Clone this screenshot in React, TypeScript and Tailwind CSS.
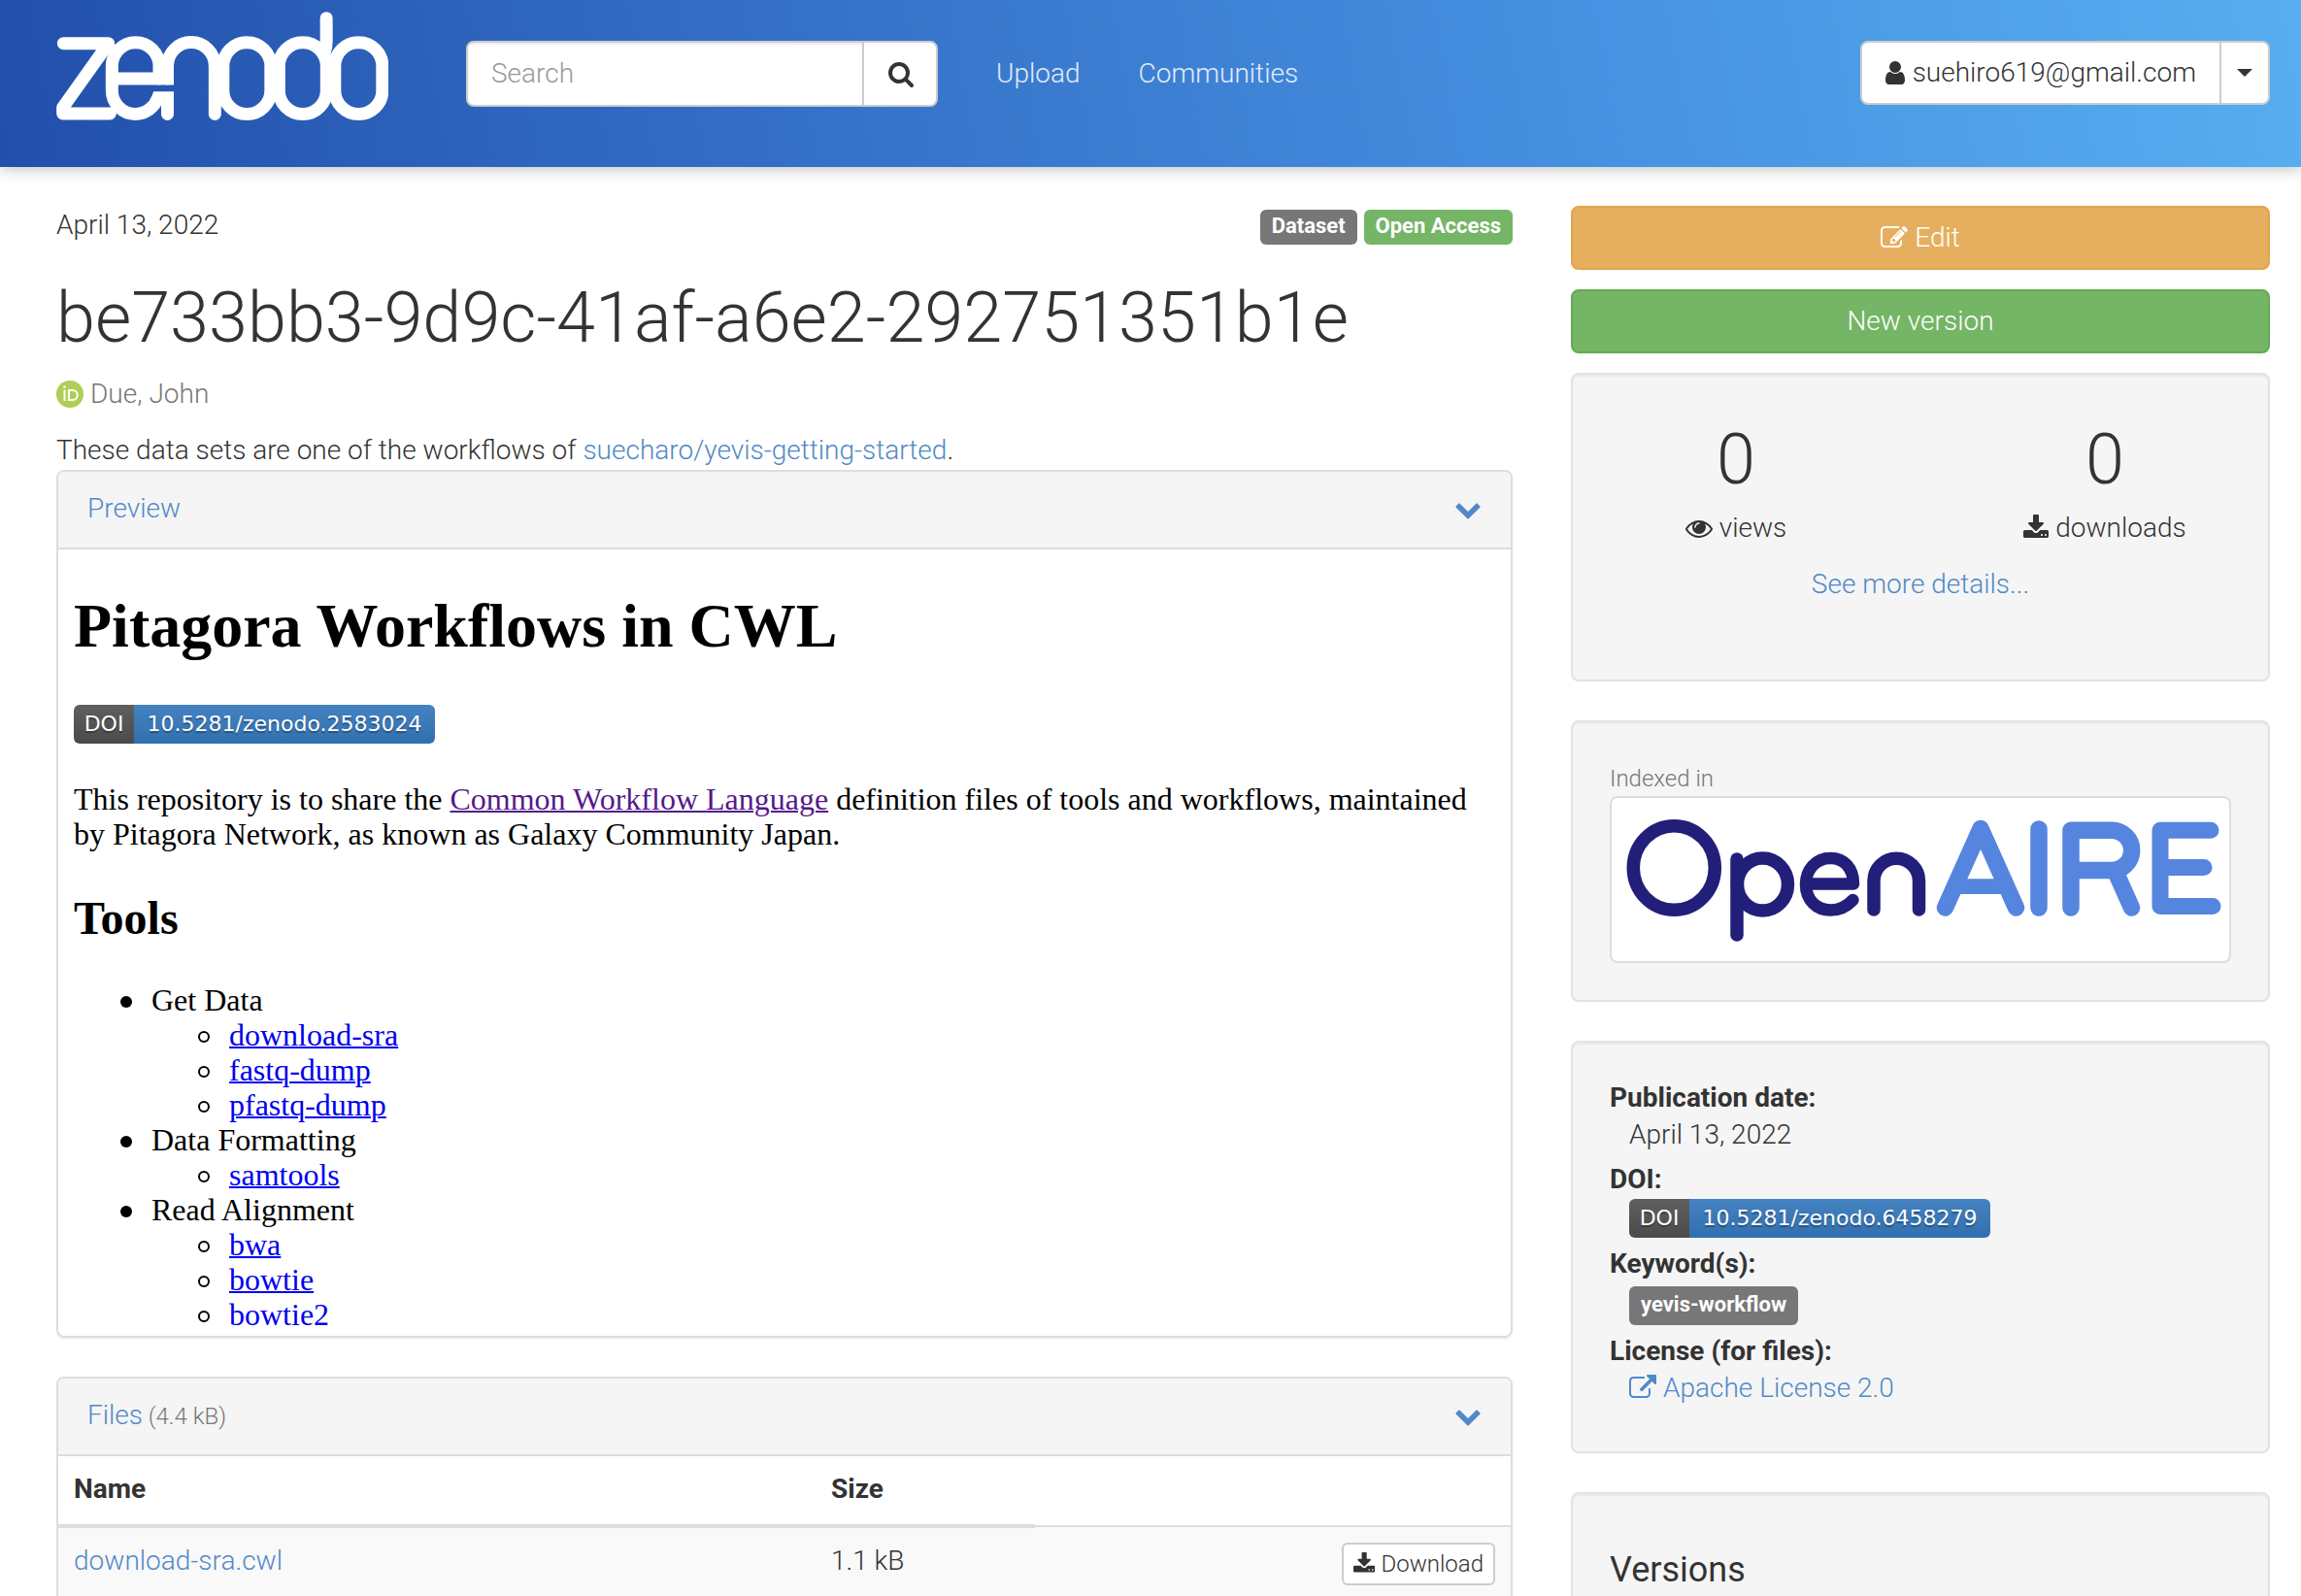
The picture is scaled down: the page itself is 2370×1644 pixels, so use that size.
import React from "react";

const ICONS = {
  search: {
    box: "0 0 1728 1792",
    d: "M1216 832q0-185-131.500-316.500t-316.500-131.500-316.500 131.500-131.500 316.500 131.500 316.500 316.500 131.500 316.500-131.500 131.500-316.500zm512 832q0 52-38 90t-90 38q-54 0-90-38l-343-342q-179 124-399 124-143 0-273.500-55.500t-225-150-150-225-55.500-273.500 55.500-273.500 150-225 225-150 273.500-55.500 273.500 55.500 225 150 150 225 55.500 273.500q0 220-124 399l343 343q37 37 37 90z",
  },
  user: {
    box: "256 0 1280 1792",
    d: "M1536 1399q0 109-62.500 187t-150.500 78h-854q-88 0-150.500-78t-62.500-187q0-85 8.500-160.500t31.500-152 58.500-131 94-89 134.500-34.500q131 128 313 128t313-128q76 0 134.500 34.500t94 89 58.500 131 31.500 152 8.500 160.500zm-256-887q0 159-112.500 271.500t-271.500 112.500-271.500-112.500-112.500-271.500 112.500-271.500 271.500-112.500 271.500 112.500 112.500 271.500z",
  },
  eye: {
    box: "0 0 1792 1792",
    d: "M1664 960q-152-236-381-353 61 104 61 225 0 185-131.500 316.500t-316.500 131.500-316.500-131.500-131.500-316.500q0-121 61-225-229 117-381 353 133 205 333.500 326.500t434.500 121.500 434.500-121.500 333.500-326.500zm-720-384q0-20-14-34t-34-14q-125 0-214.500 89.500t-89.500 214.500q0 20 14 34t34 14 34-14 14-34q0-86 61-147t147-61q20 0 34-14t14-34zm848 384q0 34-20 69-140 230-376.500 368.500t-499.500 138.500-499.500-139-376.500-368q-20-35-20-69t20-69q140-229 376.500-368t499.500-139 499.500 139 376.500 368q20 35 20 69z",
  },
  download: {
    box: "64 0 1664 1792",
    d: "M1344 1344q0-26-19-45t-45-19-45 19-19 45 19 45 45 19 45-19 19-45zm256 0q0-26-19-45t-45-19-45 19-19 45 19 45 45 19 45-19 19-45zm128-224v320q0 40-28 68t-68 28h-1472q-40 0-68-28t-28-68v-320q0-40 28-68t68-28h465l135 136q58 56 136 56t136-56l136-136h464q40 0 68 28t28 68zm-325-569q17 41-14 70l-448 448q-18 19-45 19t-45-19l-448-448q-31-29-14-70 17-39 59-39h256v-448q0-26 19-45t45-19h256q26 0 45 19t19 45v448h256q42 0 59 39z",
  },
  chevron: {
    box: "0 0 1792 1792",
    d: "M1683 808l-742 741q-19 19-45 19t-45-19l-742-741q-19-19-19-45.500t19-45.500l166-165q19-19 45-19t45 19l531 531 531-531q19-19 45-19t45 19l166 165q19 19 19 45.500t-19 45.500z",
  },
  external: {
    box: "0 0 1792 1792",
    d: "M1408 928v320q0 119-84.500 203.500t-203.500 84.500h-832q-119 0-203.500-84.500t-84.500-203.500v-832q0-119 84.500-203.500t203.500-84.500h704q14 0 23 9t9 23v64q0 14-9 23t-23 9h-704q-66 0-113 47t-47 113v832q0 66 47 113t113 47h832q66 0 113-47t47-113v-320q0-14 9-23t23-9h64q14 0 23 9t9 23zm384-864v512q0 26-19 45t-45 19-45-19l-176-176-652 652q-10 10-23 10t-23-10l-114-114q-10-10-10-23t10-23l652-652-176-176q-19-19-19-45t19-45 45-19h512q26 0 45 19t19 45z",
  },
  edit: {
    box: "0 0 1792 1792",
    d: "M888 1184l116-116-152-152-116 116v56h96v96h56zm440-720q-16-16-33 1l-350 350q-17 17-1 33t33-1l350-350q17-17 1-33zm80 594v190q0 119-84.500 203.500t-203.500 84.500h-832q-119 0-203.500-84.500t-84.500-203.500v-832q0-119 84.500-203.500t203.500-84.500h832q63 0 117 25 15 7 18 23 3 17-9 29l-49 49q-14 14-32 8-23-6-45-6h-832q-66 0-113 47t-47 113v832q0 66 47 113t113 47h832q66 0 113-47t47-113v-126q0-13 9-22l64-64q15-15 35-7t20 29zm-96-738l288 288-672 672h-288v-288zm444 132l-92 92-288-288 92-92q28-28 68-28t68 28l152 152q28 28 28 68t-28 68z",
  },
};

function Icon({ name, className = "h-7" }: { name: keyof typeof ICONS; className?: string }) {
  const icon = ICONS[name];
  return (
    <svg viewBox={icon.box} className={`${className} w-auto shrink-0`} fill="currentColor" aria-hidden="true">
      <path d={icon.d} />
    </svg>
  );
}

function ZenodoLogo() {
  return (
    <svg viewBox="24 36 1026 336" className="h-28 w-[342px]" role="img" aria-label="Zenodo">
      <g fill="none" stroke="#fff" strokeWidth="39" strokeLinecap="round">
        <path d="M46 134H185L44 332V351H190" strokeLinejoin="round" />
        <path d="M342 243V204A73 73 0 0 0 196 204V279A73 73 0 0 0 268 352.500C300 352.500 327 332 338 302.500H367.500V352.500" />
        <path d="M200 243H387" strokeLinecap="butt" />
        <path d="M367.500 243V204A73 73 0 0 1 514 204V352.500" />
        <rect x="539.500" y="131" width="147" height="221.500" rx="73" />
        <rect x="712" y="131" width="147" height="221.500" rx="73" />
        <path d="M858.500 56V130" />
        <path d="M854 160L858 140" />
        <rect x="884.500" y="131" width="147" height="221.500" rx="73" />
      </g>
    </svg>
  );
}

function OpenAireLogo() {
  return (
    <svg viewBox="0 0 620 152" className="block h-auto w-full" role="img" aria-label="OpenAIRE">
      <g fill="none" stroke="#221f7a" strokeWidth="13.500" strokeLinecap="round" strokeLinejoin="round">
        <ellipse cx="56.300" cy="64" rx="42" ry="43.300" />
        <path d="M121 55V133" />
        <ellipse cx="147.500" cy="81" rx="26" ry="27" />
        <path d="M193 80.500H241C241 64 231 54 217.500 54C202 54 192 66 192 81C192 97 203 107.500 217.500 107.500C228 107.500 235 103 240.500 97" strokeWidth="12.500" />
        <path d="M262 107V77.500A23.200 23.200 0 0 1 308.500 77.500V107" />
      </g>
      <g fill="none" stroke="#5685e0" strokeWidth="17.500" strokeLinecap="round" strokeLinejoin="round">
        <path d="M335.500 105L372 23.500L408.500 105" />
        <path d="M348 83.200H396" strokeWidth="15.700" strokeLinecap="butt" />
        <path d="M432 24V105" />
        <path d="M465 105V25.200H507A20.700 20.700 0 0 1 507 66.600H465" />
        <path d="M511 68L527.500 105" />
        <path d="M609 25.200H557V103.500H611M557 63.500H602" strokeWidth="17" />
      </g>
    </svg>
  );
}

function OrcidIcon() {
  return (
    <svg viewBox="0 0 28 28" className="size-7" role="img" aria-label="ORCID">
      <circle cx="14" cy="14" r="14" fill="#aecf54" />
      <g fill="none" stroke="#fff" strokeWidth="2">
        <path d="M8.500 9.500V21" />
        <path d="M13 10H17A4.700 5 0 0 1 17 20H13Z" />
      </g>
      <circle cx="8.500" cy="6.500" r="1.300" fill="#fff" />
    </svg>
  );
}

function DoiBadge({ value }: { value: string }) {
  return (
    <a
      href="#doi"
      className="flex h-10 w-fit overflow-hidden rounded-md text-[22px] leading-10 font-normal text-white [font-family:Verdana,'DejaVu_Sans',sans-serif] [text-shadow:0_2px_1px_rgba(0,0,0,0.3)]"
    >
      <span className="w-[62px] bg-linear-to-b from-[#5f5f5f] to-[#4b4b4b] text-center">DOI</span>
      <span className="w-[310px] bg-linear-to-b from-[#4482c1] to-[#316fae] text-center">{value}</span>
    </a>
  );
}

function Card({ className = "", children }: { className?: string; children: React.ReactNode }) {
  return (
    <section
      className={`rounded-lg border-2 border-[#e3e3e3] bg-[#f5f5f5] px-[38px] shadow-[inset_0_2px_2px_rgba(0,0,0,0.05)] ${className}`}
    >
      {children}
    </section>
  );
}

function PanelHeader({ title, note }: { title: string; note?: string }) {
  return (
    <header className="flex items-center justify-between border-b-2 border-[#ddd] bg-[#f5f5f5] px-[30px] pt-[18px] pb-5">
      <a href="#panel" className="text-[#5189c7]">
        {title}
        {note && <small className="text-2xl leading-none text-[#777]"> {note}</small>}
      </a>
      <button type="button" aria-label={`Toggle ${title}`} className="text-[#5189c7]">
        <Icon name="chevron" />
      </button>
    </header>
  );
}

const TOOLS = [
  { group: "Get Data", items: ["download-sra", "fastq-dump", "pfastq-dump"] },
  { group: "Data Formatting", items: ["samtools"] },
  { group: "Read Alignment", items: ["bwa", "bowtie", "bowtie2"] },
];

function Header() {
  return (
    <header className="relative z-10 flex h-43 shrink-0 items-start bg-[linear-gradient(80deg,#224fab,#4792e2_70%,#57aef0)] pr-8 pl-[58px] shadow-[0_0_16px_rgba(0,0,0,0.32)]">
      <a href="#home" className="mt-3">
        <ZenodoLogo />
      </a>
      <form className="mt-[42px] ml-20 flex h-17 w-[486px] overflow-hidden rounded-lg border-2 border-[#ccc] bg-white">
        <input
          type="text"
          aria-label="Search"
          placeholder="Search"
          className="min-w-0 flex-1 px-6 shadow-[inset_0_2px_2px_rgba(0,0,0,0.075)] outline-none placeholder:text-[#999]"
        />
        <button type="button" aria-label="Run search" className="flex w-[76px] items-center justify-center border-l-2 border-[#ccc]">
          <Icon name="search" />
        </button>
      </form>
      <nav className="mt-14 ml-15 flex gap-15 text-white/85">
        <a href="#upload">Upload</a>
        <a href="#communities">Communities</a>
      </nav>
      <div className="mt-[42px] ml-auto flex h-[66px] overflow-hidden rounded-lg border-2 border-[#ccc] bg-white">
        <button type="button" className="flex items-center gap-2 px-6">
          <Icon name="user" />
          suehiro619@gmail.com
        </button>
        <button type="button" aria-label="Account menu" className="flex w-[50px] items-center justify-center border-l-2 border-[#ccc]">
          <span className="border-x-8 border-t-8 border-x-transparent border-t-[#333]" />
        </button>
      </div>
    </header>
  );
}

function Preview() {
  return (
    <section className="overflow-hidden rounded-lg border-2 border-[#ddd] shadow-[0_2px_2px_rgba(0,0,0,0.05)]">
      <PanelHeader title="Preview" />
      <div className="mb-2.5 h-[800px] overflow-hidden px-4 pt-[43px] text-[32px] leading-9 font-normal text-black [font-family:'Liberation_Serif',serif]">
        <h2 className="text-[64px] leading-18 font-bold">Pitagora Workflows in CWL</h2>
        <div className="mt-[45px]">
          <DoiBadge value="10.5281/zenodo.2583024" />
        </div>
        <p className="mt-[39px]">
          This repository is to share the{" "}
          <a href="#cwl" className="text-[#551a8b] underline decoration-2">
            Common Workflow Language
          </a>{" "}
          definition files of tools and workflows, maintained by Pitagora Network, as known as Galaxy Community Japan.
        </p>
        <h3 className="mt-[42px] text-5xl leading-[54px] font-bold">Tools</h3>
        <ul className="mt-[39px] pl-20">
          {TOOLS.map((tool) => (
            <li
              key={tool.group}
              className="before:mr-5 before:mb-[3px] before:-ml-8 before:inline-block before:size-3 before:rounded-full before:bg-black"
            >
              {tool.group}
              <ul className="pl-20">
                {tool.items.map((item) => (
                  <li
                    key={item}
                    className="before:mr-5 before:mb-[3px] before:-ml-8 before:inline-block before:size-3 before:rounded-full before:border-2 before:border-black"
                  >
                    <a href={`#${item}`} className="text-[#0000ee] underline decoration-2">
                      {item}
                    </a>
                  </li>
                ))}
              </ul>
            </li>
          ))}
        </ul>
      </div>
    </section>
  );
}

function Files() {
  return (
    <section className="mt-10 overflow-hidden rounded-lg border-2 border-[#ddd]">
      <PanelHeader title="Files" note="(4.4 kB)" />
      <table className="w-full table-fixed text-left">
        <colgroup>
          <col className="w-[780px]" />
          <col className="w-[226px]" />
          <col />
        </colgroup>
        <thead>
          <tr>
            <th className="border-b-4 border-[#ddd] px-4 pt-[14px] pb-4 font-bold">Name</th>
            <th className="border-b-4 border-[#ddd] px-4 pt-[14px] pb-4 font-bold">Size</th>
            <th aria-label="Actions" />
          </tr>
        </thead>
        <tbody>
          <tr className="bg-[#f9f9f9] align-top">
            <td className="border-t-2 border-[#ddd] px-4 py-[14px]">
              <a href="#file" className="text-[#5189c7]">
                download-sra.cwl
              </a>
            </td>
            <td className="border-t-2 border-[#ddd] px-4 py-[14px]">1.1 kB</td>
            <td className="border-t-2 border-[#ddd] px-4 py-4">
              <button
                type="button"
                className="ml-auto flex h-11 items-center gap-1.5 rounded-md border-2 border-[#ccc] bg-white px-2.5 text-2xl"
              >
                <Icon name="download" className="h-6" />
                Download
              </button>
            </td>
          </tr>
        </tbody>
      </table>
    </section>
  );
}

function Sidebar() {
  return (
    <aside className="flex flex-col gap-10">
      <div className="flex flex-col gap-5">
        <button
          type="button"
          className="flex h-[66px] items-center justify-center gap-[7px] rounded-lg border-2 border-[#e3a448] bg-[#e6af5f] text-white"
        >
          <Icon name="edit" />
          Edit
        </button>
        <button type="button" className="h-[66px] rounded-lg border-2 border-[#64aa55] bg-[#74b566] text-white">
          New version
        </button>
        <Card className="pt-12 pb-[78px] text-center">
          <div className="-mx-15 grid grid-cols-2">
            <div>
              <div className="text-7xl leading-20">0</div>
              <div className="mt-2.5 flex items-center justify-center gap-[7px]">
                <Icon name="eye" />
                views
              </div>
            </div>
            <div>
              <div className="text-7xl leading-20">0</div>
              <div className="mt-2.5 flex items-center justify-center gap-[7px]">
                <Icon name="download" />
                downloads
              </div>
            </div>
          </div>
          <a href="#stats" className="mt-[18px] block text-[#5189c7]">
            See more details...
          </a>
        </Card>
      </div>

      <Card className="pt-10 pb-[38px]">
        <div className="text-2xl leading-9 text-[#777]">Indexed in</div>
        <a href="#openaire" className="block rounded-lg border-2 border-[#ddd] bg-white p-2">
          <OpenAireLogo />
        </a>
      </Card>

      <Card className="pt-[38px] pb-[46px]">
        <dl className="leading-[38px]">
          <dt className="font-bold">Publication date:</dt>
          <dd className="mb-2 ml-5">April 13, 2022</dd>
          <dt className="font-bold">DOI:</dt>
          <dd className="mb-2 ml-5 pt-px">
            <DoiBadge value="10.5281/zenodo.6458279" />
          </dd>
          <dt className="font-bold">Keyword(s):</dt>
          <dd className="mb-2 ml-5 pt-1">
            <a href="#keyword" className="block h-10 w-fit rounded-md bg-[#777] px-3 pt-2 text-[22px] leading-[21px] font-bold text-white">
              yevis-workflow
            </a>
          </dd>
          <dt className="font-bold">License (for files):</dt>
          <dd className="ml-5">
            <a href="#license" className="flex items-center gap-[7px] text-[#5189c7]">
              <Icon name="external" />
              Apache License 2.0
            </a>
          </dd>
        </dl>
      </Card>

      <Card className="pt-[58px] pb-24">
        <h4 className="text-4xl leading-10 font-normal">Versions</h4>
      </Card>
    </aside>
  );
}

export default function App() {
  return (
    <div className="flex h-screen flex-col overflow-hidden bg-white text-[28px] leading-10 font-light text-[#333] antialiased [font-family:Roboto,sans-serif]">
      <Header />
      <main className="grid grid-cols-[25fr_12fr] items-start gap-15 pt-10 pr-8 pl-[58px]">
        <article>
          <div className="flex items-start justify-between">
            <time>April 13, 2022</time>
            <div className="flex gap-[7px] pt-1 text-[22px] leading-[21px] font-bold text-white">
              <span className="rounded-md bg-[#777] px-3 pt-1.5 pb-[9px]">Dataset</span>
              <span className="rounded-md bg-[#74b566] px-3 pt-1.5 pb-[9px]">Open Access</span>
            </div>
          </div>
          <h1 className="mt-9 text-7xl leading-20 font-light">be733bb3-9d9c-41af-a6e2-292751351b1e</h1>
          <div className="mt-[18px] flex items-center gap-[7px] text-[#777]">
            <OrcidIcon />
            Due, John
          </div>
          <p className="mt-[18px]">
            These data sets are one of the workflows of{" "}
            <a href="#source" className="text-[#5189c7]">
              suecharo/yevis-getting-started
            </a>
            .
          </p>
          <Preview />
          <Files />
        </article>
        <Sidebar />
      </main>
    </div>
  );
}
